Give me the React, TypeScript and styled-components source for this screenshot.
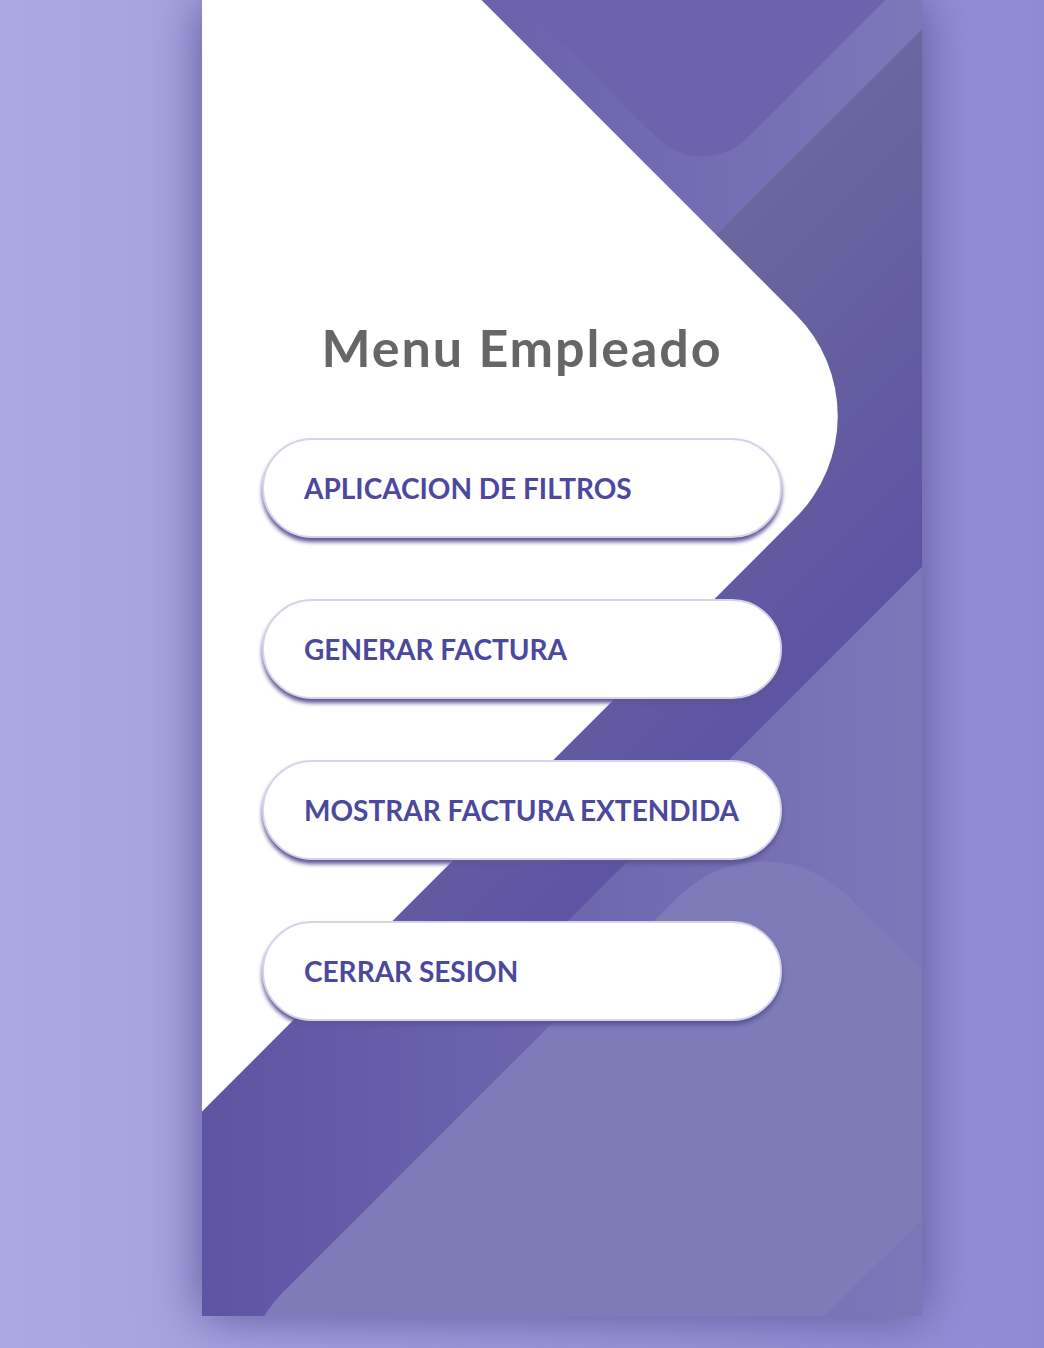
import React from "react";
import styled, { createGlobalStyle } from "styled-components";

const GlobalStyle = createGlobalStyle`
  * { box-sizing: border-box; }
  html, body { margin: 0; padding: 0; }
  body {
    background: linear-gradient(90deg, #aba9e3, #8f8ad3);
    font-family: "Lato", "Liberation Sans", sans-serif;
  }
`;

const Page = styled.div`
  min-height: 100vh;
  display: flex;
  justify-content: flex-start;
  align-items: flex-start;
  padding: 0 0 32px 202px;
`;

const Screen = styled.div`
  position: relative;
  width: 720px;
  height: 1316px;
  background: linear-gradient(90deg, #5d54a4, #7c78b8);
  box-shadow: 0 0 48px #5c5696;
  overflow: hidden;
`;

const Backdrop = styled.div`
  position: absolute;
  inset: 0;
  z-index: 0;
  clip-path: inset(0 0 0 0);
`;

const Shape = styled.span<{
  $w: number;
  $h: number;
  $top: number;
  $right: number;
  $bg: string;
  $radius: string;
}>`
  position: absolute;
  transform: rotate(45deg);
  width: ${(p) => p.$w}px;
  height: ${(p) => p.$h}px;
  top: ${(p) => p.$top}px;
  right: ${(p) => p.$right}px;
  background: ${(p) => p.$bg};
  border-radius: ${(p) => p.$radius};
`;

const Content = styled.div`
  position: relative;
  z-index: 1;
  height: 100%;
  padding: 316px 60px 0;
  display: flex;
  flex-direction: column;
`;

const Menu = styled.div`
  width: 520px;
  display: flex;
  flex-direction: column;
  gap: 61px;
`;

const Title = styled.h1`
  margin: 0 0 -1px;
  font-size: 52px;
  line-height: 62px;
  font-weight: 700;
  letter-spacing: 1.9px;
  color: #666666;
  text-align: center;
`;

const MenuButton = styled.button`
  width: 100%;
  display: flex;
  align-items: center;
  padding: 32px 16px 32px 40px;
  background: #ffffff;
  border: 2px solid #d4d3e8;
  border-radius: 52px;
  box-shadow: 0 4px 4px #5c5696;
  color: #4c489d;
  font-family: "Lato", "Liberation Sans", sans-serif;
  font-size: 28px;
  line-height: 32px;
  font-weight: 700;
  letter-spacing: 0;
  white-space: nowrap;
  text-transform: uppercase;
  text-align: left;
  cursor: pointer;
`;

const items = [
  "Aplicacion de filtros",
  "Generar factura",
  "Mostrar factura extendida",
  "Cerrar sesion",
];

export default function App() {
  return (
    <>
      <GlobalStyle />
      <Page>
        <Screen>
          <Backdrop>
            <Shape $w={400} $h={800} $top={836} $right={100} $bg="#7e7bb9" $radius="120px" />
            <Shape
              $w={380}
              $h={1080}
              $top={-52}
              $right={0}
              $bg="linear-gradient(270deg, #5d54a4, #6a679e)"
              $radius="64px"
            />
            <Shape $w={440} $h={440} $top={-348} $right={0} $bg="#6c63ac" $radius="64px" />
            <Shape $w={1040} $h={1040} $top={-104} $right={240} $bg="#ffffff" $radius="0 144px 0 0" />
          </Backdrop>
          <Content>
            <Menu>
              <Title>Menu Empleado</Title>
              {items.map((label) => (
                <MenuButton key={label}>{label}</MenuButton>
              ))}
            </Menu>
          </Content>
        </Screen>
      </Page>
    </>
  );
}
